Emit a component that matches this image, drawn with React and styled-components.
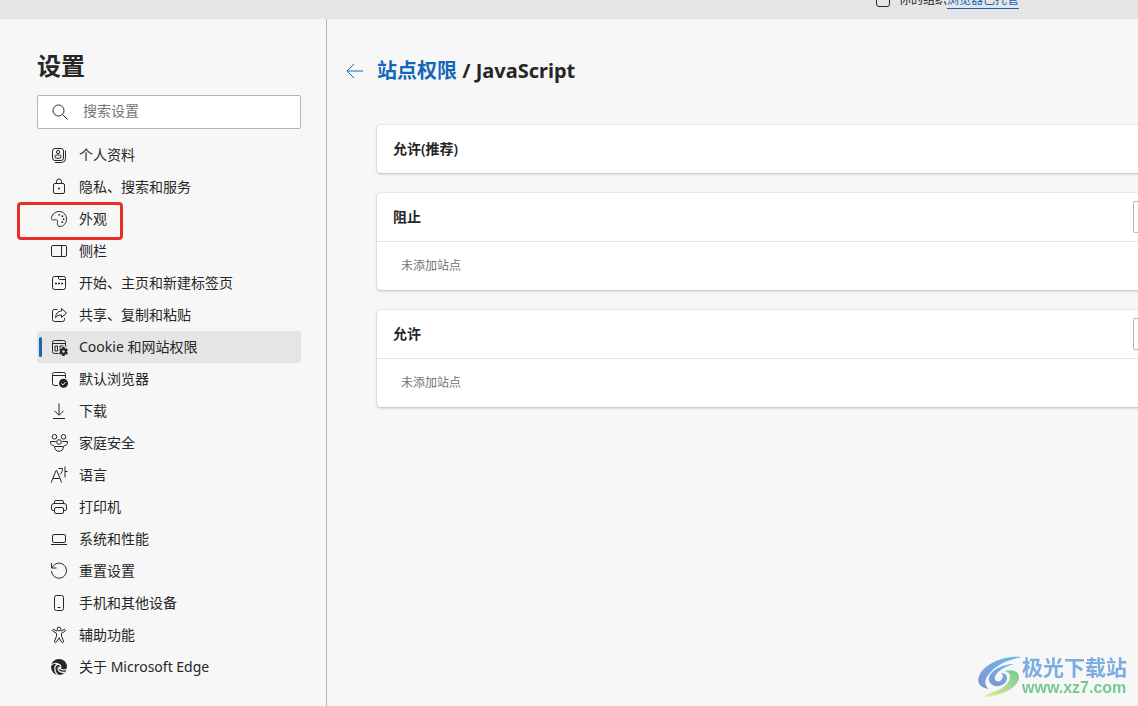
import React from "react";
import styled, { createGlobalStyle } from "styled-components";

const menu = [
  { id: "profiles", label: "个人资料" },
  { id: "privacy", label: "隐私、搜索和服务" },
  { id: "appearance", label: "外观", marked: true },
  { id: "sidebar", label: "侧栏" },
  { id: "start", label: "开始、主页和新建标签页" },
  { id: "share", label: "共享、复制和粘贴" },
  { id: "cookies", label: "Cookie 和网站权限", active: true },
  { id: "default", label: "默认浏览器" },
  { id: "downloads", label: "下载" },
  { id: "family", label: "家庭安全" },
  { id: "languages", label: "语言" },
  { id: "printers", label: "打印机" },
  { id: "system", label: "系统和性能" },
  { id: "reset", label: "重置设置" },
  { id: "phone", label: "手机和其他设备" },
  { id: "accessibility", label: "辅助功能" },
  { id: "about", label: "关于 Microsoft Edge" },
];

const siteLists = [
  { id: "block", title: "阻止" },
  { id: "allow", title: "允许" },
];

const gearTeeth = [0, 60, 120, 180, 240, 300];

// 18 x 18 drawings, stroked with the current colour
const icons = {
  profiles: (
    <>
      <rect x="2.5" y="2.5" width="11" height="12" rx="2.5" />
      <circle cx="8" cy="6" r="1.6" />
      <rect x="5" y="9" width="6" height="3.2" rx="1.2" />
      <path d="M15.5 4.5v8a4 4 0 0 1-4 4H5" />
    </>
  ),
  privacy: (
    <>
      <rect x="3.5" y="5.500" width="11" height="10" rx="1.5" />
      <path d="M6.5 5.500V3.500a2.500 2.500 0 0 1 5 0v2" />
      <circle cx="9" cy="10.500" r="1" fill="currentColor" stroke="none" />
    </>
  ),
  appearance: (
    <>
      <path d="M1.500 7.400C2.300 3.800 5.800 1.300 9.600 1.500c4.400.3 7.200 4 6.900 8.100-.3 3.800-3 6.800-6.300 6.900-2.100.1-3-1.300-2.800-3.100.2-1.500.3-3-.9-3.700-1.100-.6-2 .5-3.200.5-1.500 0-2.100-1.300-1.800-2.800z" />
      <g fill="currentColor" stroke="none">
        <circle cx="9.200" cy="4.800" r="0.900" />
        <circle cx="12.300" cy="6.200" r="0.900" />
        <circle cx="13.600" cy="9.200" r="0.900" />
        <circle cx="12.300" cy="12.200" r="0.900" />
      </g>
    </>
  ),
  sidebar: (
    <>
      <rect x="1.500" y="3.500" width="15" height="11" rx="1.500" />
      <path d="M11.500 3.500v11" />
    </>
  ),
  start: (
    <>
      <rect x="2.500" y="2.500" width="13" height="13" rx="2" />
      <path d="M8.500 2.500v2a1 1 0 0 0 1 1h6" />
      <path d="M5 9.500h2M8 9.500h2M11 9.500h2" strokeWidth="1.400" />
    </>
  ),
  share: (
    <>
      <path d="M7.500 3.500h-3a2 2 0 0 0-2 2v8a2 2 0 0 0 2 2h8a2 2 0 0 0 2-2v-1.500" />
      <path d="M11.500 2.500l5 4.500-5 4.500V9C8.500 9 7 9.800 5.500 11.800 5.700 8 7.800 5.200 11.500 5z" strokeLinejoin="round" />
    </>
  ),
  cookies: (
    <>
      <path d="M8.500 15.500h-4a2 2 0 0 1-2-2v-9a2 2 0 0 1 2-2h9a2 2 0 0 1 2 2v4M2.500 5.500h13" />
      <path d="M5 8h2.500v5H5zM10 8h3.500M10 8v2" />
      <g transform="translate(13.500 13.500)">
        {gearTeeth.map((angle) => (
          <path key={angle} d="M0-2.500v-2" strokeWidth="2.400" transform={`rotate(${angle})`} />
        ))}
        <circle r="2.400" strokeWidth="2.200" />
      </g>
    </>
  ),
  default: (
    <>
      <path d="M8 15.500H4.500a2 2 0 0 1-2-2v-9a2 2 0 0 1 2-2h9a2 2 0 0 1 2 2V8M2.500 5.500h13" />
      <circle cx="13.500" cy="13.300" r="4.500" fill="currentColor" stroke="none" />
      <path d="M11.500 13.500l1.400 1.400 2.700-2.800" stroke="#f7f7f7" />
    </>
  ),
  downloads: <path d="M9 1.500v11.500M4.500 8.800L9 13.300l4.500-4.500M3 16.500h12" />,
  family: (
    <>
      <circle cx="4.500" cy="2.800" r="2.300" />
      <circle cx="13.500" cy="2.800" r="2.300" />
      <circle cx="9" cy="8" r="2.300" />
      <path d="M4.500 12.500h9v.5a4.500 4.300 0 0 1-9 0z" strokeLinejoin="round" />
      <path d="M5.800 7.500H.5c-.2 2.600 1 4 3.500 4.300M12.200 7.500h5.300c.2 2.600-1 4-3.500 4.300" />
    </>
  ),
  languages: (
    <>
      <path d="M1.200 16.500L6 4.500h.8l4.800 12M3 12.500h6.800" />
      <path d="M8.500 2.500h4c0 2.500-.8 4.500-2.500 6M15 .5v11M15 5.500h2.500" />
    </>
  ),
  printers: (
    <>
      <path d="M4.500 12.500H3a1.500 1.500 0 0 1-1.500-1.500V8A2.500 2.500 0 0 1 4 5.500h10A2.500 2.500 0 0 1 16.500 8v3a1.500 1.500 0 0 1-1.500 1.500h-1.500" />
      <path d="M4.500 5.500V4A1.500 1.500 0 0 1 6 2.500h6A1.500 1.500 0 0 1 13.500 4v1.500" />
      <rect x="4.500" y="9.500" width="9" height="6" rx="1.500" />
    </>
  ),
  system: (
    <>
      <rect x="2.500" y="4.500" width="13" height="8" rx="1.500" />
      <path d="M1 14.500h16" />
    </>
  ),
  reset: (
    <>
      <path d="M2.200 5.500A7.500 7.500 0 1 1 1.500 9" />
      <path d="M1.500 1v5h5" />
    </>
  ),
  phone: (
    <>
      <rect x="4.500" y="1.500" width="9" height="15" rx="2" />
      <path d="M7.500 13.500h3" />
    </>
  ),
  accessibility: (
    <>
      <circle cx="9" cy="3" r="1.900" />
      <path
        d="M7 5.200L4 3.500c-1.300-.6-2.200 1.100-1 1.800l3.500 2v3l-2 4.800c-.4 1.500 1.400 2.100 2 .9L9 11.800l2.500 4.200c.6 1.200 2.400.6 2-.9l-2-4.800v-3l3.500-2c1.200-.7.3-2.400-1-1.800l-3 1.700"
        strokeLinejoin="round"
      />
    </>
  ),
  about: (
    <>
      <circle cx="9" cy="9" r="8" fill="currentColor" stroke="none" />
      <g stroke="#f7f7f7" strokeWidth="1.200">
        <path d="M.5 7.500C3 5 6.500 5 8.500 6.300" />
        <path d="M10.800 9.800c.4-2.200-1-3.700-3-3.400-3.800.6-4.300 7.400.7 11" />
        <path d="M10.500 10c-.6 1.700 3.200 3 7 .7" />
        <path d="M8.200 9.500c-.8 2.700 1.800 5.500 6.500 4.800" />
      </g>
      <path d="M8.300 9.800c-.3-1.500 2-2 2.500-.5.200.8-.3 1.300-.3 2-.8 0-1.900-.5-2.200-1.500z" fill="#f7f7f7" stroke="none" />
    </>
  ),
  search: (
    <>
      <circle cx="7.500" cy="7.500" r="5.500" />
      <path d="M11.500 11.500l5 5" />
    </>
  ),
  back: <path d="M17 9H1M8 2L1 9l7 7" />,
};

const Icon = ({ name }) => (
  <Svg viewBox="0 0 18 18" aria-hidden="true">
    {icons[name]}
  </Svg>
);

const Watermark = () => (
  <Mark>
    <svg width="44" height="42" viewBox="0 0 44 42" aria-hidden="true">
      <defs>
        <linearGradient id="blue" x1="0" y1="1" x2="1" y2="0">
          <stop offset="0" stopColor="#7b93d2" />
          <stop offset="1" stopColor="#70bdec" />
        </linearGradient>
        <linearGradient id="green" x1="0" y1="1" x2="1" y2="0">
          <stop offset="0" stopColor="#eeec94" />
          <stop offset="1" stopColor="#6fcb92" />
        </linearGradient>
      </defs>
      <path d="M44 1C27-1 8 7 2 18c-5 9 1 14 9 15-5-4-5-9 0-15C18 9 29 4 44 1z" fill="url(#blue)" />
      <path d="M36 8C23 8 10 16 11 24c1 7 11 8 16 3 4-5 2-10-4-10 3 2 2 6-1 8-3 1-6 0-5-4 1-5 9-10 19-13z" fill="url(#blue)" />
      <path d="M26 15c8-2 14 0 15 5 1 9-13 20-36 21 4-3 7-4 10-5 10-3 17-9 17-15 0-4-2-5-6-6z" fill="url(#green)" />
    </svg>
    <MarkText>
      <MarkName>极光下载站</MarkName>
      <MarkUrl>www.xz7.com</MarkUrl>
    </MarkText>
  </Mark>
);

const App = () => {
  return (
    <Page>
      <GlobalStyle />
      <Banner>
        <DeviceMark />
        <p>
          你的组织<a href="#managed">浏览器已托管</a>
        </p>
      </Banner>
      <Columns>
        <Sidebar>
          <Title>设置</Title>
          <Search>
            <Icon name="search" />
            <input type="search" placeholder="搜索设置" aria-label="搜索设置" />
          </Search>
          <Menu>
            {menu.map((el) => (
              <MenuLink key={el.id} href={`#${el.id}`} $active={el.active}>
                <Icon name={el.id} />
                {el.label}
                {el.marked && <RedFrame />}
              </MenuLink>
            ))}
          </Menu>
        </Sidebar>
        <Main>
          <Header>
            <BackButton type="button" aria-label="返回">
              <Icon name="back" />
            </BackButton>
            <h2>
              <a href="#permissions">站点权限</a> / JavaScript
            </h2>
          </Header>
          <Cards>
            <Card>
              <CardHead>
                <h3>允许(推荐)</h3>
              </CardHead>
            </Card>
            {siteLists.map((el) => (
              <Card key={el.id}>
                <CardHead>
                  <h3>{el.title}</h3>
                  <AddButton type="button" aria-label="添加" />
                </CardHead>
                <Empty>未添加站点</Empty>
              </Card>
            ))}
          </Cards>
        </Main>
      </Columns>
      <Watermark />
    </Page>
  );
};

export default App;

const GlobalStyle = createGlobalStyle`
  * {
    box-sizing: border-box;
    margin: 0;
    padding: 0;
  }
  body {
    background-color: #f7f7f7;
    color: #262626;
    font-family: "Noto Sans", "Noto Sans CJK SC", sans-serif;
    font-size: 14px;
    line-height: 20px;
  }
  a {
    color: #1168b8;
    text-decoration: none;
  }
  input,
  button {
    font: inherit;
  }
`;

const Page = styled.div`
  display: flex;
  flex-direction: column;
  min-height: 100vh;
  overflow: hidden;
`;

const Banner = styled.div`
  display: flex;
  justify-content: flex-end;
  align-items: flex-end;
  gap: 9px;
  height: 19px;
  padding: 0 119px 10px 0;
  background-color: #e5e5e5;
  overflow: hidden;
  p {
    font-size: 12px;
    line-height: 18px;
    white-space: nowrap;
  }
  a {
    border-bottom: 1px solid #1168b8;
  }
`;

const DeviceMark = styled.span`
  width: 14px;
  height: 14px;
  margin-bottom: 2px;
  border: 1px solid #262626;
  border-radius: 3px;
`;

const Columns = styled.div`
  display: flex;
  flex: 1;
`;

const Sidebar = styled.aside`
  flex: none;
  width: 327px;
  padding: 31px 25px 20px 37px;
  border-right: 1px solid #b4b4b4;
`;

const Title = styled.h1`
  font-size: 24px;
  line-height: 32px;
  font-weight: 700;
`;

const Svg = styled.svg`
  flex: none;
  width: 18px;
  height: 18px;
  fill: none;
  stroke: currentColor;
  overflow: visible;
`;

const Search = styled.label`
  display: flex;
  align-items: center;
  gap: 14px;
  height: 34px;
  margin-top: 13px;
  padding: 0 13px;
  border: 1px solid #b4b4b4;
  border-radius: 2px;
  background-color: #fff;
  input {
    flex: 1;
    min-width: 0;
    padding-bottom: 2px;
    border: none;
    outline: none;
    background: none;
    &::placeholder {
      color: #767676;
    }
  }
`;

const Menu = styled.nav`
  display: flex;
  flex-direction: column;
  margin-top: 10px;
`;

const MenuLink = styled.a`
  position: relative;
  display: flex;
  align-items: center;
  gap: 11px;
  height: 32px;
  padding-left: 13px;
  border-radius: 2px;
  color: #262626;
  background-color: ${({ $active }) => ($active ? "#e5e5e5" : "transparent")};
  &::before {
    content: "";
    display: ${({ $active }) => ($active ? "block" : "none")};
    position: absolute;
    left: 2px;
    top: 6px;
    width: 3px;
    height: 20px;
    border-radius: 2px;
    background-color: #1168b8;
  }
`;

const RedFrame = styled.span`
  position: absolute;
  left: -20px;
  top: -1px;
  width: 106px;
  height: 38px;
  border: 3px solid #e52f28;
  border-radius: 4px;
`;

const Main = styled.main`
  flex: 1;
  min-width: 0;
  padding: 38px 0 20px 18px;
  overflow: hidden;
`;

const Header = styled.div`
  display: flex;
  align-items: center;
  gap: 12px;
  h2 {
    font-size: 20px;
    line-height: 28px;
    font-weight: 700;
  }
`;

const BackButton = styled.button`
  display: flex;
  padding: 1px;
  border: none;
  background: none;
  color: #1168b8;
`;

const Cards = styled.div`
  display: flex;
  flex-direction: column;
  gap: 20px;
  margin: 40px -80px 0 32px;
`;

const Card = styled.section`
  border-radius: 4px;
  background-color: #fff;
  box-shadow: 0 1px 3px rgba(0, 0, 0, 0.22), 0 0 2px rgba(0, 0, 0, 0.12);
`;

const CardHead = styled.div`
  display: flex;
  justify-content: space-between;
  align-items: center;
  height: 48px;
  padding: 0 16px;
  h3 {
    font-size: 14px;
    font-weight: 600;
  }
`;

const AddButton = styled.button`
  width: 69px;
  height: 32px;
  border: 1px solid #b4b4b4;
  border-radius: 2px;
  background-color: #fff;
`;

const Empty = styled.p`
  padding: 14px 24px;
  border-top: 1px solid #e5e5e5;
  color: #737373;
  font-size: 12px;
`;

const Mark = styled.div`
  position: fixed;
  right: 11px;
  bottom: 8px;
  display: flex;
  align-items: center;
`;

const MarkText = styled.div`
  display: flex;
  flex-direction: column;
`;

const MarkName = styled.span`
  color: #7cade0;
  font-size: 21px;
  line-height: 22px;
  font-weight: 700;
`;

const MarkUrl = styled.span`
  color: #72ca92;
  font-family: "Liberation Sans", sans-serif;
  font-size: 16px;
  line-height: 20px;
  font-weight: 700;
`;
